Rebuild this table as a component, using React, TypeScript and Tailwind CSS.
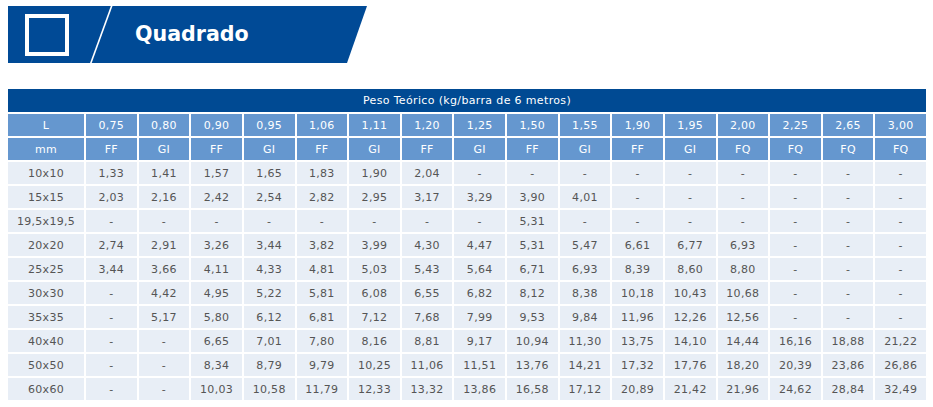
import React from "react";

const thicknesses = ["0,75", "0,80", "0,90", "0,95", "1,06", "1,11", "1,20", "1,25", "1,50", "1,55", "1,90", "1,95", "2,00", "2,25", "2,65", "3,00"];
const finishes = ["FF", "GI", "FF", "GI", "FF", "GI", "FF", "GI", "FF", "GI", "FF", "GI", "FQ", "FQ", "FQ", "FQ"];

const rows: [string, string[]][] = [
  ["10x10", ["1,33", "1,41", "1,57", "1,65", "1,83", "1,90", "2,04", "-", "-", "-", "-", "-", "-", "-", "-", "-"]],
  ["15x15", ["2,03", "2,16", "2,42", "2,54", "2,82", "2,95", "3,17", "3,29", "3,90", "4,01", "-", "-", "-", "-", "-", "-"]],
  ["19,5x19,5", ["-", "-", "-", "-", "-", "-", "-", "-", "5,31", "-", "-", "-", "-", "-", "-", "-"]],
  ["20x20", ["2,74", "2,91", "3,26", "3,44", "3,82", "3,99", "4,30", "4,47", "5,31", "5,47", "6,61", "6,77", "6,93", "-", "-", "-"]],
  ["25x25", ["3,44", "3,66", "4,11", "4,33", "4,81", "5,03", "5,43", "5,64", "6,71", "6,93", "8,39", "8,60", "8,80", "-", "-", "-"]],
  ["30x30", ["-", "4,42", "4,95", "5,22", "5,81", "6,08", "6,55", "6,82", "8,12", "8,38", "10,18", "10,43", "10,68", "-", "-", "-"]],
  ["35x35", ["-", "5,17", "5,80", "6,12", "6,81", "7,12", "7,68", "7,99", "9,53", "9,84", "11,96", "12,26", "12,56", "-", "-", "-"]],
  ["40x40", ["-", "-", "6,65", "7,01", "7,80", "8,16", "8,81", "9,17", "10,94", "11,30", "13,75", "14,10", "14,44", "16,16", "18,88", "21,22"]],
  ["50x50", ["-", "-", "8,34", "8,79", "9,79", "10,25", "11,06", "11,51", "13,76", "14,21", "17,32", "17,76", "18,20", "20,39", "23,86", "26,86"]],
  ["60x60", ["-", "-", "10,03", "10,58", "11,79", "12,33", "13,32", "13,86", "16,58", "17,12", "20,89", "21,42", "21,96", "24,62", "28,84", "32,49"]],
];

function Banner() {
  return (
    <div className="relative ml-[2px] flex h-[57px] w-[359px] items-center bg-[#004a96] [clip-path:polygon(0_0,100%_0,calc(100%-20px)_100%,0_100%)]">
      <svg className="absolute inset-0" width="359" height="57" viewBox="0 0 359 57">
        <line x1="104" y1="-1" x2="82.5" y2="58" stroke="#ffffff" strokeWidth="1.6" />
      </svg>
      <div className="ml-[17px] h-[42px] w-[44px] border-[4px] border-white" />
      <span className="ml-[66px] text-[20.6px] font-bold leading-none text-white">Quadrado</span>
    </div>
  );
}

export default function App() {
  const headCell = "h-[22px] bg-[#6597cf] p-0 text-center font-normal text-white tracking-[0.3px]";
  const bodyCell = "h-[22px] bg-[#e8eef6] p-0 text-center text-[#555555] tracking-[0.3px]";

  return (
    <div className="min-h-screen bg-white pl-[6px] pt-[6px] font-['DejaVu_Sans',Verdana,sans-serif]">
      <Banner />
      <table className="mt-[24px] w-[922px] table-fixed border-separate border-spacing-[2px] text-[11px] leading-none">
        <colgroup>
          <col className="w-[76px]" />
          {thicknesses.map((t) => (
            <col key={t} />
          ))}
        </colgroup>
        <thead>
          <tr>
            <th colSpan={17} className="h-[23px] bg-[#004a93] p-0 text-center font-normal text-white tracking-[0.35px]">
              Peso Teórico (kg/barra de 6 metros)
            </th>
          </tr>
          <tr>
            <th className={headCell}>L</th>
            {thicknesses.map((t) => (
              <th key={t} className={headCell}>
                {t}
              </th>
            ))}
          </tr>
          <tr>
            <th className={headCell}>mm</th>
            {finishes.map((f, i) => (
              <th key={i} className={headCell}>
                {f}
              </th>
            ))}
          </tr>
        </thead>
        <tbody>
          {rows.map(([size, values]) => (
            <tr key={size}>
              <td className={bodyCell}>{size}</td>
              {values.map((v, i) => (
                <td key={i} className={bodyCell}>
                  {v}
                </td>
              ))}
            </tr>
          ))}
        </tbody>
      </table>
    </div>
  );
}
